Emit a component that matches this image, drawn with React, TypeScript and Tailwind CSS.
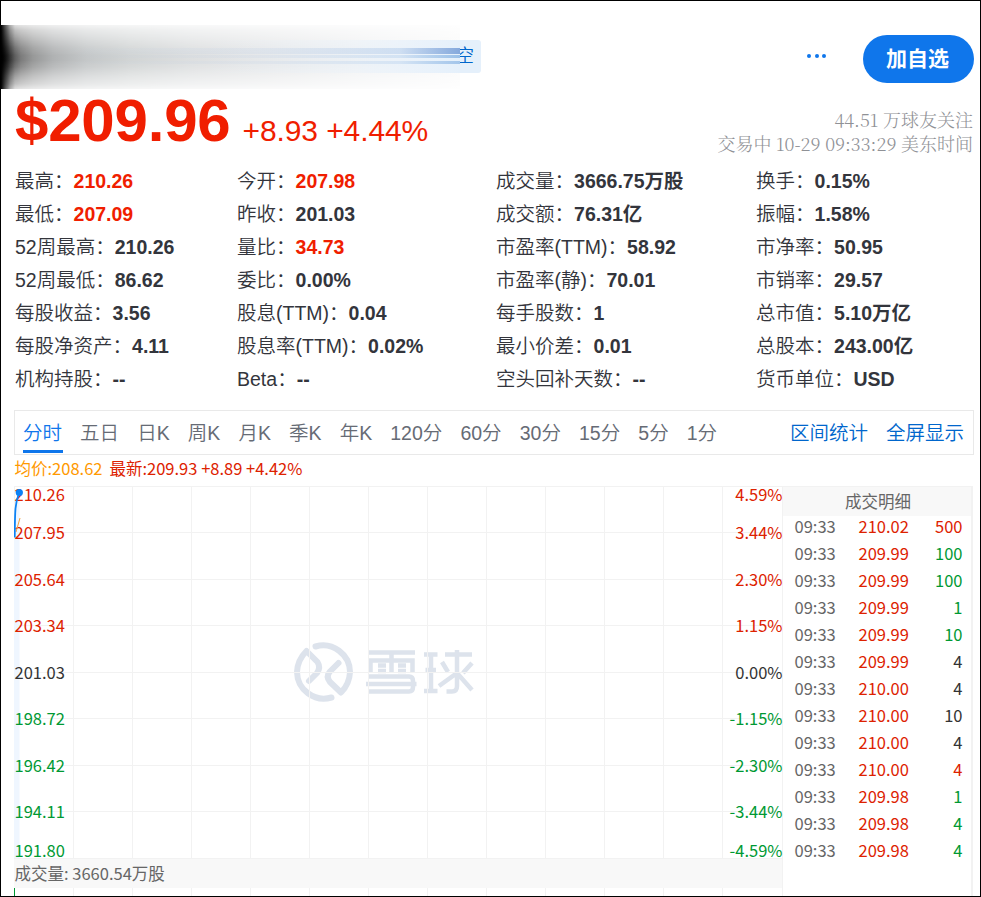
import React from "react";

const RED = "text-[#f01e00]";

const stats: [string, string, boolean?][][] = [
  [["最高", "210.26", true], ["最低", "207.09", true], ["52周最高", "210.26"], ["52周最低", "86.62"], ["每股收益", "3.56"], ["每股净资产", "4.11"], ["机构持股", "--"]],
  [["今开", "207.98", true], ["昨收", "201.03"], ["量比", "34.73", true], ["委比", "0.00%"], ["股息(TTM)", "0.04"], ["股息率(TTM)", "0.02%"], ["Beta", "--"]],
  [["成交量", "3666.75万股"], ["成交额", "76.31亿"], ["市盈率(TTM)", "58.92"], ["市盈率(静)", "70.01"], ["每手股数", "1"], ["最小价差", "0.01"], ["空头回补天数", "--"]],
  [["换手", "0.15%"], ["振幅", "1.58%"], ["市净率", "50.95"], ["市销率", "29.57"], ["总市值", "5.10万亿"], ["总股本", "243.00亿"], ["货币单位", "USD"]],
];

const tabs = ["分时", "五日", "日K", "周K", "月K", "季K", "年K", "120分", "60分", "30分", "15分", "5分", "1分"];

const axis: [string, string, number][] = [
  ["210.26", "4.59%", 495],
  ["207.95", "3.44%", 533],
  ["205.64", "2.30%", 580],
  ["203.34", "1.15%", 626],
  ["201.03", "0.00%", 673],
  ["198.72", "-1.15%", 719],
  ["196.42", "-2.30%", 766],
  ["194.11", "-3.44%", 812],
  ["191.80", "-4.59%", 851],
];

const trades: [string, string, string][] = [
  ["210.02", "500", "r"], ["209.99", "100", "g"], ["209.99", "100", "g"], ["209.99", "1", "g"], ["209.99", "10", "g"],
  ["209.99", "4", "k"], ["210.00", "4", "k"], ["210.00", "10", "k"], ["210.00", "4", "k"], ["210.00", "4", "r"],
  ["209.98", "1", "g"], ["209.98", "4", "g"], ["209.98", "4", "g"],
];

const tone: Record<string, string> = { r: "text-[#dd2200]", g: "text-[#009933]", k: "text-[#333333]" };

function axisTone(i: number) {
  return i < 4 ? tone.r : i === 4 ? tone.k : tone.g;
}

const columns = [0, 1, 2, 3, 4, 5, 6, 7, 8, 9, 10, 11, 12];

function Chart() {
  return (
    <div className="relative h-[410px] w-[768px]">
      <svg className="absolute inset-0" width="768" height="410" viewBox="14 486 768 410">
        <g stroke="#dde3ec" fill="none" strokeWidth="6" strokeLinecap="round" strokeLinejoin="round">
          <path d="M315.500 646.500A27 27 0 0 1 350 672Q349.500 684 341 692.500L330 682Q325.500 676.500 330 671.500L338.500 663" />
          <path d="M331.500 697.500A27 27 0 0 1 297 672Q297.500 660 306.500 651L317.500 662Q321 667.500 317 673L309 681" />
        </g>
        <g stroke="#dde3ec" fill="none" strokeWidth="4.500">
          <path d="M369 652.500H415M391.500 652.500V672M370.500 672V660.500H412.500V672M378 665.500H386M398 665.500H406M378 671H386M398 671H406M369 676.500H409Q413 676.500 413 681V687Q413 691.500 409 691.500H369M366 684H416.500" />
          <path d="M424 654.500H437.500M425.500 670H436M424 691H437.500M431 654V691M445 654.500H472M457 650V686Q457 691.500 452 691.500H446.500M442 662L448 672M472 663L463 673M439 686L457 673L472 690" />
        </g>
        <g stroke="#f2f2f2" fill="none">
          {columns.map((c) => (
            <path key={c} d={`M${14.5 + c * 59} 486V896`} />
          ))}
          {[486.5, 532.5, 579.5, 625.5, 672.5, 718.5, 765.5, 811.5, 858.5].map((y) => (
            <path key={y} d={`M14 ${y}H782`} />
          ))}
        </g>
        <path d="M14 538C15 520 15 505 19.500 494V858H14Z" fill="#eff6ff" />
        <path d="M14 859H782V888H14Z" fill="#f8f8f8" />
        <path d="M14.500 888V896" stroke="#009933" />
      </svg>
      {axis.map(([price, pct, y], i) => (
        <div key={price} className={`absolute left-[0.500px] flex w-[768px] justify-between leading-6 ${axisTone(i)}`} style={{ top: y - 499 }}>
          <span>{price}</span>
          <span>{pct}</span>
        </div>
      ))}
      <svg className="absolute top-0 left-0" width="20" height="60" viewBox="14 486 20 60" fill="none">
        <path d="M16 532L20 518" stroke="#f5a03c" />
        <path d="M14.700 537.500C15 510 15 504 19 493" stroke="#0b82f5" strokeWidth="1.800" />
        <circle cx="19.300" cy="492.500" r="3.600" fill="#0b82f5" />
      </svg>
      <div className="absolute top-[375px] left-[0.500px] leading-6 text-[#666666]">成交量: 3660.54万股</div>
    </div>
  );
}

function Trades() {
  return (
    <div className="h-[410px] w-[191px] border-t border-r-2 border-l border-[#f2f2f2]">
      <div className="h-[29px] bg-[#f8f8f8] pl-[2px] text-center leading-[28px] text-[#666666]">成交明细</div>
      {trades.map(([price, qty, c], i) => (
        <div key={i} className="flex h-[27px] pr-[8.500px] pl-[11.500px] leading-[21px]">
          <span className="w-[64px] text-[#666666]">09:33</span>
          <span className="text-[#dd2200]">{price}</span>
          <span className={`ml-auto ${tone[c]}`}>{qty}</span>
        </div>
      ))}
    </div>
  );
}

export default function App() {
  return (
    <div className="h-[897px] w-[981px] overflow-hidden border border-black bg-white font-['Liberation_Sans','Noto_Sans_CJK_SC',sans-serif] text-[19.500px] text-[#33353c]">
      <header className="flex h-[88px] pt-[24px]">
        <div className="relative h-[64px] w-[480px]">
          <div className="absolute top-[15px] left-[380px] h-[33px] w-[100px] rounded-[3px] bg-[#e5f0fb]" />
          <span className="absolute top-[15px] left-[455px] text-[18px] leading-[33px] font-[350] text-[#0066cc]">空</span>
          <div className="absolute inset-y-0 left-0 w-[459px] bg-white" />
          <div className="absolute inset-y-0 left-0 w-[459px] bg-[linear-gradient(to_right,#000_0,#2a2a2a_5px,#555_12px,#7c7c7c_20px,#989999_32px,#b0b2b3_52px,#c4c7c8_85px,#d2d5d5_130px,#dddfe0_190px,#e7e8e9_270px,#f2f3f4_370px,#fafafa_459px)] [mask-image:linear-gradient(to_bottom,#0003,#0006_8%,#0009_20%,#000d_36%,black_48%,black_55%,#000d_66%,#0009_80%,#0006_92%,#0003)]" />
          <div className="absolute inset-y-0 left-0 w-[14px] bg-[linear-gradient(to_right,#000_0,#0009_4px,#0003_9px,transparent)]" />
          <div className="absolute top-[15px] left-[200px] h-[33px] w-[259px] bg-[linear-gradient(to_right,transparent,#e5f0fb55_60%,#e5f0fb)]" />
          <div className="absolute top-[23px] left-[60px] h-[6px] w-[399px] bg-[linear-gradient(to_right,transparent,#b4c8e430_50%,#a9c5e870_85%,#86a9dc)]" />
          <div className="absolute top-[30px] left-[60px] h-[3px] w-[399px] bg-[linear-gradient(to_right,transparent,#b4c8e428_50%,#b4cfec70_85%,#9bc0e8)]" />
          <div className="absolute top-[36px] left-[60px] h-[3px] w-[399px] bg-[linear-gradient(to_right,transparent,#b4c8e428_50%,#b9d2ee70_85%,#a3c5ea)]" />
        </div>
        <div className="mt-[29px] ml-[326px] flex gap-[3.500px]">
          {[0, 1, 2].map((d) => (
            <i key={d} className="size-[4px] rounded-full bg-[#0f76eb]" />
          ))}
        </div>
        <button className="mt-[10px] mr-[6px] ml-auto h-[48px] w-[111px] rounded-full bg-[#0f76eb] pr-[2px] text-[21px] font-bold text-white">加自选</button>
      </header>

      <section className="flex h-[76px] justify-between pr-[7px] pl-[14px]">
        <div className={`flex items-baseline gap-[12px] ${RED}`}>
          <strong className="text-[60px] leading-[64px] tracking-[-0.2px]">$209.96</strong>
          <span className="text-[30px] tracking-[-0.1px]">+8.93 +4.44%</span>
        </div>
        <div className="pt-[18px] text-right font-['Noto_Serif_CJK_SC','Liberation_Serif','Noto_Sans_CJK_SC',serif] text-[18px] leading-[24px] font-[350] text-[#8f9196]">
          <p>44.51 万球友关注</p>
          <p>交易中 10-29 09:33:29 美东时间</p>
        </div>
      </section>

      <section className="grid h-[245px] grid-cols-[222px_259px_260px_1fr] pl-[14px]">
        {stats.map((col, i) => (
          <div key={i}>
            {col.map(([label, value, up]) => (
              <div key={label} className="h-[33px] leading-[33px] whitespace-nowrap">
                <span className="font-[350]">{label}：</span>
                <strong className={up ? RED : ""}>{value}</strong>
              </div>
            ))}
          </div>
        ))}
      </section>

      <nav className="ml-[13px] flex h-[45px] w-[960px] gap-[18.100px] border border-[#e9e9e9] pr-[9px] pl-[8px] leading-[44px] font-[350] text-[#666b75]">
        {tabs.map((t, i) => (
          <span key={t} className={i === 0 ? "-mr-px h-[42px] w-[40px] border-b-3 border-[#0f76eb] text-[#0f76eb]" : ""}>{t}</span>
        ))}
        <span className="ml-auto text-[#0066cc]">区间统计</span>
        <span className="text-[#0066cc]">全屏显示</span>
      </nav>

      <div className="ml-[13px] font-['Noto_Sans_CJK_SC',sans-serif] text-[16.500px]">
        <div className="flex h-[31px] gap-[7px] pl-[0.500px] leading-[26px]">
          <span className="text-[#ff9900]">均价:208.62</span>
          <span className="text-[#dd2200]">最新:209.93 +8.89 +4.42%</span>
        </div>
        <div className="flex">
          <Chart />
          <Trades />
        </div>
      </div>
    </div>
  );
}
